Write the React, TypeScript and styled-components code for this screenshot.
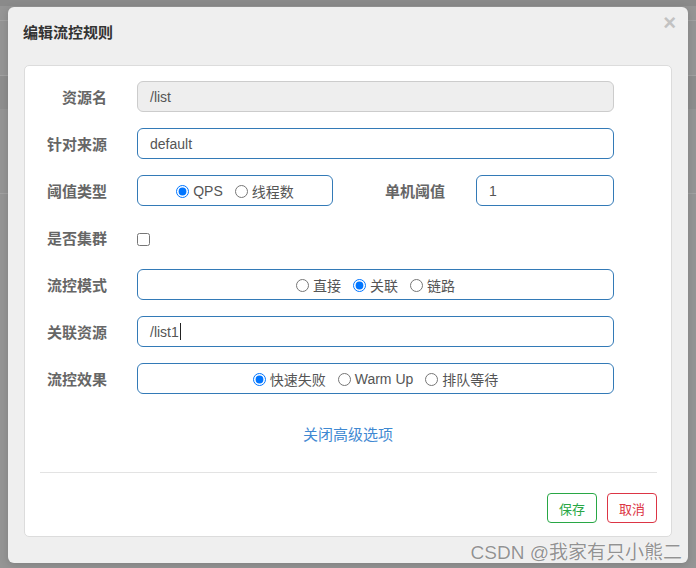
import React from "react";
import styled, { createGlobalStyle } from "styled-components";

const GlobalStyle = createGlobalStyle`
  html, body {
    margin: 0;
    padding: 0;
  }
  body {
    font-family: "Liberation Sans", "Noto Sans CJK SC", sans-serif;
    font-size: 14px;
    color: #555;
  }
`;

// grey backdrop behind the modal, with the faint lines of the page beneath
const Backdrop = styled.div`
  position: relative;
  width: 696px;
  height: 568px;
  box-sizing: border-box;
  padding: 7px 8px 5px 8px;
  background-color: #959595;
  background-image: linear-gradient(#8a8a8a, #8a8a8a),
    linear-gradient(#a2a2a2, #a2a2a2), linear-gradient(#a2a2a2, #a2a2a2),
    linear-gradient(#8e8e8e, #8e8e8e), linear-gradient(#a2a2a2, #a2a2a2),
    linear-gradient(#a2a2a2, #a2a2a2);
  background-size: 100% 6px, 100% 1px, 100% 1px, 100% 33px, 100% 1px, 100% 1px;
  background-position: 0 0, 0 20px, 0 75px, 0 76px, 0 108px, 0 193px;
  background-repeat: no-repeat;
  overflow: hidden;
`;

const Dialog = styled.div`
  width: 680px;
  height: 556px;
  box-sizing: border-box;
  background: #efefef;
  border-radius: 6px;
  box-shadow: 0 2px 8px rgba(0, 0, 0, 0.15);
  padding: 0 16px 26px 16px;
  display: flex;
  flex-direction: column;
`;

const Header = styled.div`
  flex-shrink: 0;
  height: 58px;
  display: flex;
  justify-content: space-between;
  align-items: flex-start;
`;

const Title = styled.h4`
  margin: 18px 0 0 -1px;
  font-size: 15px;
  line-height: 16px;
  font-weight: bold;
  color: #333;
`;

const Close = styled.button`
  margin: 5px -4px 0 0;
  padding: 0;
  border: none;
  background: none;
  font-family: "Liberation Sans", sans-serif;
  font-size: 22px;
  line-height: 22px;
  font-weight: bold;
  color: #c2c2c2;
  cursor: pointer;
`;

const Card = styled.div`
  flex: 1;
  min-height: 0;
  background: #fff;
  border: 1px solid #dcdcdc;
  border-radius: 5px;
  padding: 15px 14px 0 0;
  display: flex;
  flex-direction: column;
`;

const Form = styled.div`
  display: grid;
  grid-template-columns: 82px 477px;
  grid-auto-rows: 31px;
  column-gap: 30px;
  row-gap: 16px;
`;

const Label = styled.label`
  display: flex;
  align-items: center;
  justify-content: flex-end;
  font-size: 15px;
  font-weight: bold;
  color: #666;
  white-space: nowrap;
`;

const Field = styled.div<{ $readonly?: boolean }>`
  box-sizing: border-box;
  height: 31px;
  display: flex;
  align-items: center;
  padding: 0 12px;
  font-size: 14px;
  color: #555;
  background: ${(p) => (p.$readonly ? "#eeeeee" : "#fff")};
  border: 1px solid ${(p) => (p.$readonly ? "#cccccc" : "#337ab7")};
  border-radius: 6px;
`;

const Caret = styled.span`
  display: inline-block;
  width: 1px;
  height: 17px;
  margin-left: 1px;
  background: #222;
`;

const RadioBox = styled.div`
  box-sizing: border-box;
  height: 31px;
  display: flex;
  align-items: center;
  justify-content: center;
  gap: 12px;
  border: 1px solid #337ab7;
  border-radius: 6px;
  padding-top: 1px;
`;

const Option = styled.label`
  display: flex;
  align-items: center;
  gap: 4px;
  font-size: 14px;
  color: #555;
  cursor: pointer;
  input {
    margin: 0;
    width: 13px;
    height: 13px;
  }
`;

const SplitRow = styled.div`
  display: grid;
  grid-template-columns: 196px 1fr 138px;
`;

const SubLabel = styled(Label)`
  padding-right: 31px;
`;

const CheckCell = styled.div`
  display: flex;
  align-items: center;
  padding-top: 4px;
  input {
    margin: 0;
    width: 13px;
    height: 13px;
  }
`;

const Toggle = styled.a`
  align-self: center;
  margin: 31px 0 0 14px;
  font-size: 15px;
  line-height: 20px;
  color: #3f89d2;
  text-decoration: none;
  cursor: pointer;
`;

const Divider = styled.hr`
  margin: 27px 0 0 15px;
  border: none;
  border-top: 1px solid #e3e3e3;
`;

const Footer = styled.div`
  margin-top: 20px;
  display: flex;
  justify-content: flex-end;
  gap: 10px;
`;

const Button = styled.button<{ $color: string }>`
  width: 50px;
  height: 30px;
  padding: 0;
  background: #fff;
  border: 1px solid ${(p) => p.$color};
  border-radius: 4px;
  color: ${(p) => p.$color};
  font-family: "Liberation Sans", "Noto Sans CJK SC", sans-serif;
  font-size: 13px;
  cursor: pointer;
`;

const Watermark = styled.div`
  position: absolute;
  right: 14px;
  bottom: 4px;
  font-family: "Liberation Sans", "Noto Sans CJK SC", sans-serif;
  font-size: 19px;
  color: rgba(110, 110, 110, 0.75);
  text-shadow: 0 0 1px #fff, 0 0 1px #fff;
  white-space: nowrap;
`;

type Opt = { label: string; checked?: boolean };

function RadioGroup({ name, options }: { name: string; options: Opt[] }) {
  return (
    <RadioBox>
      {options.map((o) => (
        <Option key={o.label}>
          <input type="radio" name={name} defaultChecked={o.checked} />
          {o.label}
        </Option>
      ))}
    </RadioBox>
  );
}

export default function App() {
  return (
    <>
      <GlobalStyle />
      <Backdrop>
        <Dialog>
          <Header>
            <Title>编辑流控规则</Title>
            <Close>×</Close>
          </Header>
          <Card>
            <Form>
              <Label>资源名</Label>
              <Field $readonly>/list</Field>

              <Label>针对来源</Label>
              <Field>default</Field>

              <Label>阈值类型</Label>
              <SplitRow>
                <RadioGroup
                  name="grade"
                  options={[{ label: "QPS", checked: true }, { label: "线程数" }]}
                />
                <SubLabel>单机阈值</SubLabel>
                <Field>1</Field>
              </SplitRow>

              <Label>是否集群</Label>
              <CheckCell>
                <input type="checkbox" />
              </CheckCell>

              <Label>流控模式</Label>
              <RadioGroup
                name="strategy"
                options={[
                  { label: "直接" },
                  { label: "关联", checked: true },
                  { label: "链路" },
                ]}
              />

              <Label>关联资源</Label>
              <Field>
                /list1
                <Caret />
              </Field>

              <Label>流控效果</Label>
              <RadioGroup
                name="behavior"
                options={[
                  { label: "快速失败", checked: true },
                  { label: "Warm Up" },
                  { label: "排队等待" },
                ]}
              />
            </Form>
            <Toggle>关闭高级选项</Toggle>
            <Divider />
            <Footer>
              <Button $color="#28a745">保存</Button>
              <Button $color="#dc3545">取消</Button>
            </Footer>
          </Card>
        </Dialog>
        <Watermark>CSDN @我家有只小熊二</Watermark>
      </Backdrop>
    </>
  );
}
